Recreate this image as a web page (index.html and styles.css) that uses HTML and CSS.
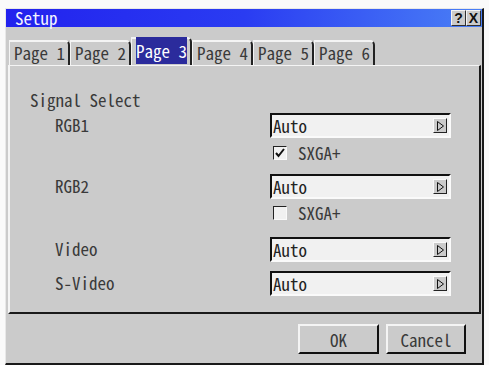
FILE: index.html
```html
<!DOCTYPE html>
<html lang="en">
<head>
    <meta charset="UTF-8">
    <title>Setup</title>
    <link rel="stylesheet" href="styles.css">
</head>
<body>
    <div class="window">
        <div class="title-bar">
            <span class="title-text">Setup</span>
            <div class="title-buttons">
                <span class="title-btn">?</span>
                <span class="title-btn">X</span>
            </div>
        </div>

        <div class="tabs">
            <div class="tab">Page 1</div>
            <div class="tab">Page 2</div>
            <div class="tab active"><span class="tab-label">Page 3</span></div>
            <div class="tab">Page 4</div>
            <div class="tab">Page 5</div>
            <div class="tab">Page 6</div>
        </div>

        <div class="panel">
            <div class="heading">Signal Select</div>

            <div class="row row-rgb1">
                <div class="label">RGB1</div>
                <div class="select"><span>Auto</span><span class="arrow"><svg width="9" height="10" viewBox="0 0 9 10"><path d="M1.5 0.5 L7.5 5 L1.5 9.5 Z" fill="none" stroke="#111" stroke-width="1"/></svg></span></div>
            </div>
            <div class="row row-check1">
                <div class="label"></div>
                <label class="check"><span class="box"><svg width="12" height="12" viewBox="0 0 12 12"><path d="M2 6 L4.5 9 L10 2" fill="none" stroke="#111" stroke-width="2"/></svg></span>SXGA+</label>
            </div>

            <div class="row row-rgb2">
                <div class="label">RGB2</div>
                <div class="select"><span>Auto</span><span class="arrow"><svg width="9" height="10" viewBox="0 0 9 10"><path d="M1.5 0.5 L7.5 5 L1.5 9.5 Z" fill="none" stroke="#111" stroke-width="1"/></svg></span></div>
            </div>
            <div class="row row-check2">
                <div class="label"></div>
                <label class="check"><span class="box"></span>SXGA+</label>
            </div>

            <div class="row row-video">
                <div class="label">Video</div>
                <div class="select"><span>Auto</span><span class="arrow"><svg width="9" height="10" viewBox="0 0 9 10"><path d="M1.5 0.5 L7.5 5 L1.5 9.5 Z" fill="none" stroke="#111" stroke-width="1"/></svg></span></div>
            </div>
            <div class="row row-svideo">
                <div class="label">S-Video</div>
                <div class="select"><span>Auto</span><span class="arrow"><svg width="9" height="10" viewBox="0 0 9 10"><path d="M1.5 0.5 L7.5 5 L1.5 9.5 Z" fill="none" stroke="#111" stroke-width="1"/></svg></span></div>
            </div>
        </div>

        <div class="footer">
            <button class="btn btn-ok">OK</button>
            <button class="btn btn-cancel">Cancel</button>
        </div>
    </div>
</body>
</html>
```

FILE: styles.css
```css
body {
    margin: 0;
    padding: 8px 5px 0 5px;
    background-color: #fafafa;
    font-family: "Noto Sans Mono CJK JP", "DejaVu Sans Mono", monospace;
    font-size: 17px;
    color: #3a3a3a;
}

.window {
    width: 476px;
    height: 354px;
    background-color: #cbcbcb;
    border-top: 1px solid #e8e8e8;
    border-left: 1px solid #e8e8e8;
    border-right: 2px solid #1a1a1a;
    border-bottom: 2px solid #1a1a1a;
    display: flex;
    flex-direction: column;
}

.title-bar {
    height: 18px;
    background: linear-gradient(to right, #2222ee, #2a3cf2 50%, #4a80f6);
    display: flex;
    align-items: center;
    justify-content: space-between;
    padding-left: 9px;
}

.title-text {
    color: #f4f4ff;
    line-height: 18px;
}

.title-buttons {
    display: flex;
    margin-right: 1px;
}

.title-btn {
    width: 13px;
    height: 14px;
    background-color: #cbcbcb;
    border-top: 1px solid #f4f4f4;
    border-left: 1px solid #f4f4f4;
    border-right: 1px solid #303030;
    border-bottom: 1px solid #303030;
    font-family: "Liberation Sans", Arial, sans-serif;
    font-weight: bold;
    font-size: 14px;
    line-height: 14px;
    text-align: center;
    color: #111;
}

.tabs {
    display: flex;
    align-items: flex-end;
    height: 27px;
    margin-top: 11px;
    padding-left: 3px;
}

.tab {
    height: 23px;
    padding: 0 3px 0 4px;
    border-top: 2px solid #f4f4f4;
    border-left: 1px solid #f4f4f4;
    border-right: 2px solid #222;
    border-top-right-radius: 5px;
    line-height: 22px;
    white-space: nowrap;
}

.tab.active {
    height: 26px;
    line-height: 24px;
}

.tab-label {
    background-color: #2b2b9c;
    color: white;
    padding: 1px 0;
}

.panel {
    margin-left: 2px;
    margin-right: 1px;
    border-top: 1px solid #f4f4f4;
    border-left: 2px solid #f4f4f4;
    border-right: 2px solid #1a1a1a;
    border-bottom: 2px solid #1a1a1a;
    padding: 24px 0 0 20px;
    box-sizing: border-box;
    height: 249px;
}

.heading {
    line-height: 20px;
}

.row {
    display: flex;
    align-items: center;
}

.label {
    width: 215px;
    padding-left: 25px;
    line-height: 20px;
    position: relative;
    top: -1px;
}

.row-rgb1 { margin-top: 3px; }
.row-check1 { margin-top: 5px; height: 20px; }
.row-rgb2 { margin-top: 11px; }
.row-check2 { margin-top: 4px; height: 20px; }
.row-video { margin-top: 14px; }
.row-svideo { margin-top: 9px; }

.select {
    width: 176px;
    height: 21px;
    background-color: #f1f1f1;
    border-top: 2px solid #111;
    border-left: 2px solid #111;
    border-right: 2px solid #fafafa;
    border-bottom: 2px solid #fafafa;
    display: flex;
    align-items: center;
    justify-content: space-between;
    line-height: 21px;
    padding-left: 1px;
    color: #222;
}

.arrow {
    width: 12px;
    height: 13px;
    margin-right: 2px;
    background-color: #cbcbcb;
    border-top: 1px solid #fafafa;
    border-left: 1px solid #fafafa;
    border-right: 1px solid #222;
    border-bottom: 1px solid #222;
    display: flex;
    align-items: center;
    justify-content: center;
}

.check {
    display: flex;
    align-items: center;
    line-height: 20px;
}

.box {
    width: 12px;
    height: 12px;
    margin-left: 3px;
    margin-right: 11px;
    background-color: #f1f1f1;
    border-top: 1px solid #222;
    border-left: 1px solid #222;
    border-right: 1px solid #fafafa;
    border-bottom: 1px solid #fafafa;
    display: flex;
    align-items: center;
    justify-content: center;
}

.footer {
    display: flex;
    justify-content: flex-end;
    gap: 7px;
    padding: 10px 16px 0 0;
}

.btn {
    height: 30px;
    background-color: #cbcbcb;
    border-top: 2px solid #f4f4f4;
    border-left: 2px solid #f4f4f4;
    border-right: 2px solid #111;
    border-bottom: 2px solid #111;
    font-family: "Noto Sans Mono CJK JP", "DejaVu Sans Mono", monospace;
    font-size: 17px;
    color: #3a3a3a;
    padding: 0;
}

.btn-ok { width: 81px; }
.btn-cancel { width: 80px; }
```
